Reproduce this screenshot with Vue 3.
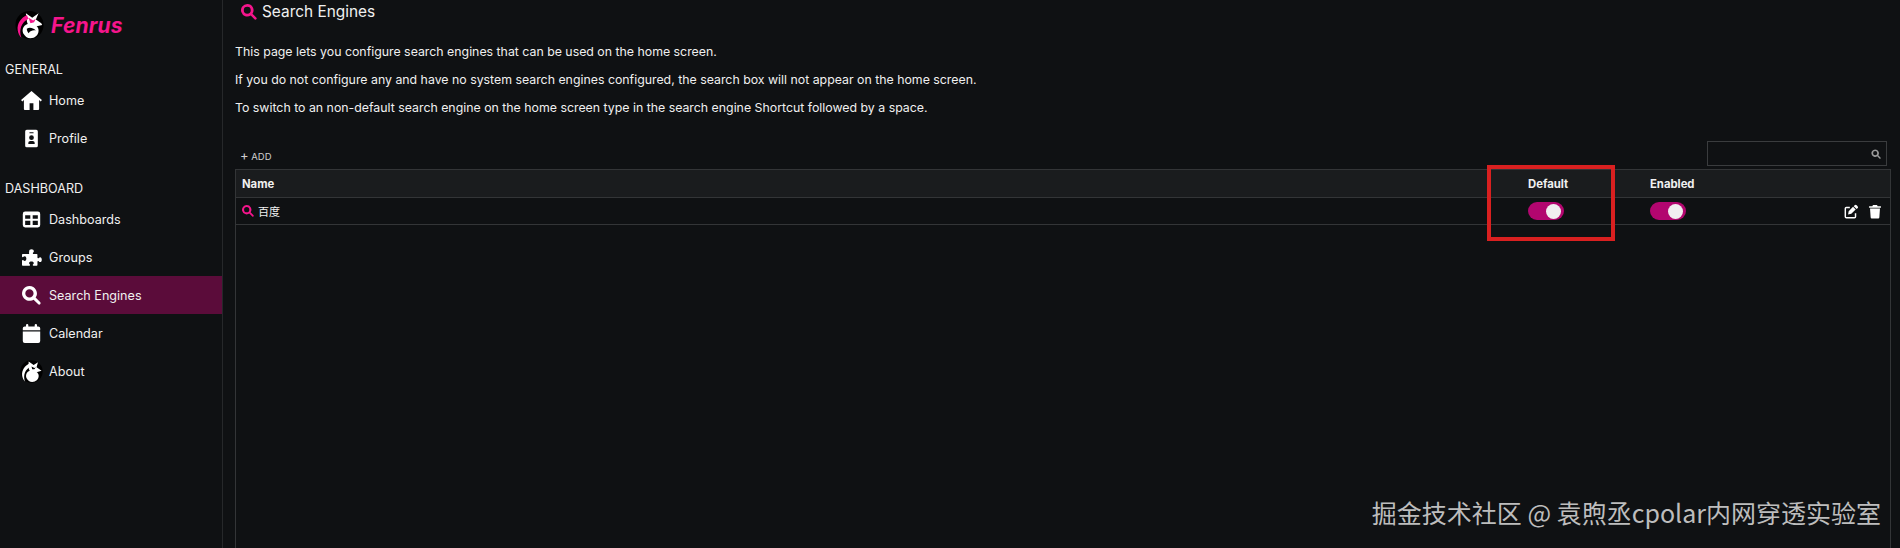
<script setup>
const general = [
  { label: 'Home', icon: 'home', vb: '2 2 20 20' },
  { label: 'Profile', icon: 'profile', vb: '0 1 24 22' },
]
const dashboard = [
  { label: 'Dashboards', icon: 'grid', vb: '0 1 24 22' },
  { label: 'Groups', icon: 'puzzle', vb: '0 2 24 21' },
  { label: 'Search Engines', icon: 'search', vb: '1 1 23 23', active: true },
  { label: 'Calendar', icon: 'calendar', vb: '0 0 24 24' },
  { label: 'About', icon: 'fox' },
]
const paths = {
  home: 'M12 2 1 11.5l1.3 1.5L4 11.6V21a1 1 0 0 0 1 1h5v-7h4v7h5a1 1 0 0 0 1-1v-9.4l1.7 1.4 1.3-1.5z',
  profile: 'M6 1h12a2 2 0 0 1 2 2v18a2 2 0 0 1-2 2H6a2 2 0 0 1-2-2V3a2 2 0 0 1 2-2zm4 3a.7.7 0 0 0 0 1.5h4A.7.7 0 0 0 14 4zm2 4a3 3 0 1 0 0 6 3 3 0 0 0 0-6zm-4 11h8v-1.500a2.500 2.500 0 0 0-2.500-2.500h-3A2.500 2.500 0 0 0 8 17.500z',
  grid: 'M4 2h16a3 3 0 0 1 3 3v14a3 3 0 0 1-3 3H4a3 3 0 0 1-3-3V5a3 3 0 0 1 3-3zm0 4.500V11h6.500V6.500zm9.500 0V11H20V6.500zM4 13.500V19h6.500v-5.500zm9.500 0V19H20v-5.500z',
  puzzle: 'M9 4.500C9 3 10.300 2 12 2s3 1 3 2.500c0 .8-.4 1.300-.8 1.800-.3.300-.5.600-.5 1 0 .5.400.7 1 .7h3.800a1 1 0 0 1 1 1v3.500c0 .6.300 1 .8 1 .4 0 .7-.2 1-.5.400-.4.900-.8 1.700-.8 1.200 0 2 1.300 2 3s-.8 3-2 3c-.8 0-1.300-.4-1.700-.8-.3-.3-.6-.5-1-.5-.5 0-.8.400-.8 1V22a1 1 0 0 1-1 1h-4c-.6 0-.9-.4-.9-.9 0-.4.200-.7.500-1 .4-.4.800-.9.800-1.600 0-1.200-1.300-2-3-2s-3 .8-3 2c0 .7.400 1.200.800 1.600.3.300.5.600.5 1 0 .5-.3.900-.9.900H1a1 1 0 0 1-1-1v-5.500c0-.6.400-1 .9-1 .4 0 .7.300 1 .6.400.4.900.7 1.600.7 1.200 0 2-1.300 2-3s-.8-3-2-3c-.7 0-1.200.3-1.600.7-.3.300-.6.600-1 .6-.5 0-.9-.4-.9-1V9a1 1 0 0 1 1-1h7.100c.6 0 1-.2 1-.7 0-.4-.2-.7-.5-1C9.400 5.800 9 5.300 9 4.500z',
  search: 'M10 1a9 9 0 0 1 7.500 14l5.700 5.700a1.800 1.800 0 0 1-2.500 2.500L15 17.500A9 9 0 1 1 10 1zm0 4a5 5 0 1 0 0 10 5 5 0 0 0 0-10z',
  calendar: 'M6.500 0A1.500 1.500 0 0 1 8 1.500V3h8V1.500a1.500 1.500 0 0 1 3 0V3h1.500A2.500 2.500 0 0 1 23 5.500V8H1V5.500A2.500 2.500 0 0 1 3.500 3H5V1.500A1.500 1.500 0 0 1 6.500 0zM1 9.500h22v12a2.500 2.500 0 0 1-2.500 2.500h-17A2.500 2.500 0 0 1 1 21.500z',
  edit: 'M21.700 1.300a2.500 2.500 0 0 0-3.500 0l-1.500 1.500 5 5 1.500-1.500a2.500 2.500 0 0 0 0-3.500zM15.500 4 8 11.500 7 17l5.500-1L20 8.500zM4 4a3 3 0 0 0-3 3v14a3 3 0 0 0 3 3h14a3 3 0 0 0 3-3v-6h-2.500v6a.5.5 0 0 1-.5.500H4a.5.5 0 0 1-.5-.5V7a.5.5 0 0 1 .5-.5h6V4z',
  trash: 'M8 1.500 7.500 3H2.500a1.300 1.300 0 0 0 0 2.500h19a1.300 1.300 0 0 0 0-2.500h-5L16 1.500A1 1 0 0 0 15 1H9a1 1 0 0 0-1 .5zM3.500 7l1 15a2 2 0 0 0 2 2h11a2 2 0 0 0 2-2l1-15z',
}
</script>

<template>
  <div class="page">
    <aside class="sidebar">
      <div class="brand">
        <svg class="logo" viewBox="0 0 32 32">
          <circle cx="16" cy="16" r="15.500" fill="#000" />
          <path d="M12 3l7 5 7-5-3 7 6 4 1 2-6 1.500-5 1c-3 0-6-4-6-8z" fill="#fff" />
          <path d="M15 8l5 3 3-2-2 4-4 1z" fill="#f5158c" />
          <path d="M13 5C7 8 2 14 3 22c.4 3 2 6 4 8C4 21 7 13 15 9z" fill="#f5158c" />
          <path d="M9 25c-2-5 1-10 7-10.500 5-.4 10 3 10 7.500 0 5-4 8.500-9 8.500-3.500 0-6-2-8-5.500z" fill="#fff" />
          <path d="M13 20c3-2 7-1 10 2-3-.5-6 0-8 3-1-1.500-2-3-2-5z" fill="#000" />
        </svg>
        <span class="brand-name">Fenrus</span>
      </div>

      <div class="group-title">GENERAL</div>
      <a v-for="i in general" :key="i.label" class="nav-item">
        <svg class="nav-icon" :viewBox="i.vb"><path :d="paths[i.icon]" fill="#fff" fill-rule="evenodd" /></svg>
        <span>{{ i.label }}</span>
      </a>

      <div class="group-title second">DASHBOARD</div>
      <a v-for="i in dashboard" :key="i.label" class="nav-item" :class="{ active: i.active }">
        <svg v-if="i.icon === 'fox'" class="nav-icon fox" viewBox="0 0 32 32">
          <circle cx="16" cy="16" r="15.500" fill="#000" />
          <path d="M12 2l7 5 6-4-2 7 7 5-7 2-5 1c-3 0-6-4-6-8z" fill="#fff" />
          <path d="M13 5C7 8 2 14 3 22c.4 3 2 6 4 8C4 21 7 13 15 9z" fill="#fff" />
          <path d="M9 25c-2-5 1-10 7-10.500 5-.4 10 3 10 7.500 0 5-4 8.500-9 8.500-3.500 0-6-2-8-5.500z" fill="#fff" />
          <path d="M16 9l4 2 2-1-2 3-3 0z" fill="#000" />
        </svg>
        <svg v-else class="nav-icon" :viewBox="i.vb"><path :d="paths[i.icon]" fill="#fff" fill-rule="evenodd" /></svg>
        <span>{{ i.label }}</span>
      </a>
    </aside>

    <main class="main">
      <h1 class="title">
        <svg class="title-icon" viewBox="1 1 23 23"><path :d="paths.search" fill="#f5158c" fill-rule="evenodd" /></svg>
        <span>Search Engines</span>
      </h1>

      <div class="intro">
        <p>This page lets you configure search engines that can be used on the home screen.</p>
        <p>If you do not configure any and have no system search engines configured, the search box will not appear on the home screen.</p>
        <p>To switch to an non-default search engine on the home screen type in the search engine Shortcut followed by a space.</p>
      </div>

      <div class="toolbar">
        <button class="add"><span class="plus">+</span> ADD</button>
        <div class="filter">
          <svg class="filter-icon" viewBox="0 0 24 24"><path :d="paths.search" fill="#9a9a9a" fill-rule="evenodd" /></svg>
        </div>
      </div>

      <div class="table">
        <div class="row head">
          <div class="c-name">Name</div>
          <div class="c-default">Default</div>
          <div class="c-enabled">Enabled</div>
          <div class="c-actions"></div>
        </div>
        <div class="row body">
          <div class="c-name cell-name">
            <svg class="row-icon" viewBox="1 1 23 23"><path :d="paths.search" fill="#f5158c" fill-rule="evenodd" /></svg>
            <span>百度</span>
          </div>
          <div class="c-default"><span class="toggle"><i></i></span></div>
          <div class="c-enabled"><span class="toggle"><i></i></span></div>
          <div class="c-actions actions">
            <svg viewBox="0 0 24 24"><path :d="paths.edit" fill="#fff" fill-rule="evenodd" /></svg>
            <svg viewBox="0 0 24 24"><path :d="paths.trash" fill="#fff" fill-rule="evenodd" /></svg>
          </div>
        </div>
        <div class="highlight"></div>
      </div>

      <div class="watermark">掘金技术社区 @ 袁煦丞cpolar内网穿透实验室</div>
    </main>
  </div>
</template>

<style>
html, body { margin: 0; background: #0f1113; overflow: hidden; }
</style>

<style scoped>
.page {
  display: flex;
  width: 1900px;
  height: 548px;
  overflow: hidden;
  background: #0f1113;
  color: #f0f0f0;
  font-family: Inter, "Noto Sans CJK SC", sans-serif;
}
.sidebar {
  width: 222px;
  flex: none;
  border-right: 1px solid #26282a;
}
.brand {
  display: flex;
  align-items: center;
  height: 50px;
  padding-left: 15px;
}
.logo { width: 29px; height: 30px; }
.brand-name {
  margin-left: 7px;
  color: #f5158c;
  font-size: 21px;
  font-weight: 700;
  font-style: italic;
  letter-spacing: 0.2px;
}
.group-title {
  margin-top: 11px;
  padding-left: 5px;
  height: 18px;
  line-height: 18px;
  font-size: 12.6px;
}
.group-title.second { margin-top: 23px; }
.nav-item {
  display: flex;
  align-items: center;
  height: 38px;
  padding-left: 22px;
  font-size: 12.6px;
}
.group-title + .nav-item { margin-top: 2px; }
.nav-item.active { background: #5b0c3a; }
.nav-icon {
  width: 19px;
  height: 19px;
  margin-right: 8px;
  flex: none;
  overflow: visible;
}
.nav-icon.fox {
  width: 23px;
  height: 23px;
  margin: 0 6px 0 -2px;
}
.main {
  position: relative;
  flex: 1;
  min-width: 0;
  padding: 0 9px 0 12px;
}
.title {
  display: flex;
  align-items: center;
  height: 23px;
  margin: 0 0 1px 6px;
  font-size: 15.4px;
  font-weight: 400;
}
.title-icon { width: 16px; height: 16px; margin-right: 5px; }
.intro { margin-top: 15px; }
.intro p {
  margin: 0;
  height: 28px;
  line-height: 28px;
  font-size: 12.33px;
}
.toolbar {
  display: flex;
  justify-content: space-between;
  align-items: flex-end;
  height: 27px;
  margin-top: 19px;
  padding-right: 4px;
}
.add {
  padding: 0 0 0 5px;
  height: 20px;
  margin-bottom: 3px;
  border: 0;
  background: none;
  color: #cfcfcf;
  font: 9.5px Inter, sans-serif;
}
.plus { font-size: 13px; }
.filter {
  position: relative;
  width: 178px;
  height: 23px;
  border: 1px solid #3a3c3e;
  margin-bottom: 2px;
}
.filter-icon {
  position: absolute;
  right: 5px;
  top: 7px;
  width: 10px;
  height: 10px;
}
.table {
  position: relative;
  height: 380px;
  margin-top: 1px;
  border: 1px solid #333537;
}
.row {
  display: flex;
  align-items: center;
  border-bottom: 1px solid #333537;
}
.row.head {
  height: 27px;
  background: #1a1c1e;
  font-size: 11.3px;
  font-weight: 700;
}
.row.body { height: 26px; font-size: 11px; }
.c-name { flex: 1; padding-left: 6px; }
.c-default { width: 122px; }
.c-enabled { width: 122px; }
.c-actions { width: 118px; }
.c-default, .c-enabled { flex: none; }
.c-actions { flex: none; }
.cell-name { display: flex; align-items: center; padding-left: 6px; }
.row-icon { width: 12px; height: 12px; margin-right: 4px; }
.toggle {
  position: relative;
  display: block;
  width: 36px;
  height: 18px;
  border-radius: 9px;
  background: #b2066f;
}
.toggle i {
  position: absolute;
  right: 3px;
  top: 1.500px;
  width: 15px;
  height: 15px;
  border-radius: 50%;
  background: #f1eef0;
}
.actions {
  display: flex;
  justify-content: flex-end;
  gap: 10px;
  padding-right: 8px;
  box-sizing: border-box;
}
.actions svg { width: 14px; height: 15px; }
.highlight {
  position: absolute;
  left: 1251px;
  top: -5px;
  width: 120px;
  height: 68px;
  border: 4px solid #d92020;
}
.watermark {
  position: absolute;
  right: 19px;
  top: 494px;
  font-size: 25px;
  line-height: 36px;
  color: #bdbdbd;
  font-family: "Noto Sans CJK SC", sans-serif;
}
</style>
